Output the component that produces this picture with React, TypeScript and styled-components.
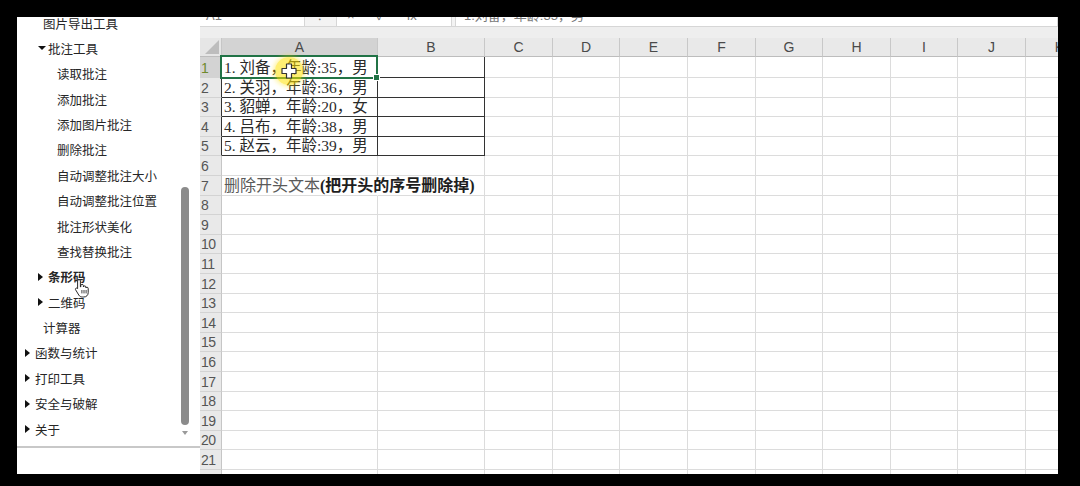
import React from "react";
import styled, { createGlobalStyle } from "styled-components";

const GlobalStyle = createGlobalStyle`
  html, body {
    margin: 0;
    padding: 0;
    background: #000;
  }
  body {
    font-family: "Noto Sans CJK SC", "Noto Sans", sans-serif;
  }
`;

const CJK = `"Noto Sans CJK SC", "Noto Sans", sans-serif`;
const SERIF = `"Liberation Serif", "Noto Sans CJK SC", serif`;
const SANS = `"Liberation Sans", "Noto Sans CJK SC", sans-serif`;

const Frame = styled.div`
  width: 1080px;
  height: 486px;
  box-sizing: border-box;
  padding: 17px 22px 12px 17px;
  background: #000;
  display: flex;
`;

const Screen = styled.div`
  width: 1041px;
  height: 457px;
  background: #fff;
  display: flex;
  overflow: hidden;
`;

/* ---------- left tool tree ---------- */

const Panel = styled.div`
  position: relative;
  width: 183px;
  flex: none;
  display: flex;
  flex-direction: column;
  background: #fff;
`;

const PanelBody = styled.div`
  height: 429px;
  display: flex;
  overflow: hidden;
`;

const TreeList = styled.div`
  flex: 1;
  margin-top: -6.7px;
`;

const TreeRow = styled.div<{ $indent: number; $bold?: boolean }>`
  height: 25.375px;
  display: flex;
  align-items: center;
  padding-left: ${(p) => p.$indent}px;
  font-family: ${CJK};
  font-size: 12.5px;
  font-weight: ${(p) => (p.$bold ? 700 : 400)};
  color: #262626;
  white-space: nowrap;
`;

const Caret = styled.span<{ $open?: boolean }>`
  width: 10px;
  flex: none;
  display: flex;
  align-items: center;
  &::before {
    content: "";
    display: block;
    width: 0;
    height: 0;
    ${(p) =>
      p.$open
        ? `border-left: 4px solid transparent;
           border-right: 4px solid transparent;
           border-top: 4.5px solid #111;`
        : `border-top: 4px solid transparent;
           border-bottom: 4px solid transparent;
           border-left: 5px solid #111;`}
  }
`;

const ScrollCol = styled.div`
  width: 20px;
  flex: none;
  padding-top: 170px;
  box-sizing: border-box;
  display: flex;
  flex-direction: column;
  align-items: flex-start;
`;

const Thumb = styled.div`
  width: 8px;
  height: 238px;
  margin-left: 1px;
  border-radius: 4px;
  background: #8b8b8b;
`;

const ScrollArrow = styled.div`
  margin: 6px 0 0 2px;
  width: 0;
  height: 0;
  border-left: 3.5px solid transparent;
  border-right: 3.5px solid transparent;
  border-top: 4px solid #9a9a9a;
`;

const PanelFoot = styled.div`
  height: 26px;
  border-top: 2px solid #c8c8c8;
`;

const HandCursor = styled.svg`
  position: absolute;
  left: 57px;
  top: 261px;
`;

/* ---------- spreadsheet ---------- */

const Sheet = styled.div`
  flex: 1;
  display: flex;
  flex-direction: column;
  min-width: 0;
  overflow: hidden;
`;

const FormulaBar = styled.div`
  height: 10px;
  flex: none;
  display: flex;
  overflow: hidden;
  background: #fff;
`;

const BarBox = styled.div<{ $w?: number; $tint?: boolean }>`
  ${(p) => (p.$w ? `width: ${p.$w}px; flex: none;` : `flex: 1;`)}
  box-sizing: border-box;
  display: flex;
  align-items: flex-end;
  overflow: hidden;
  background: ${(p) => (p.$tint ? "#f3f3f3" : "#fff")};
  border-right: 1px solid #d6d6d6;
  border-bottom: 1px solid #d6d6d6;
`;

const BarText = styled.span<{ $pad: number; $gap?: number }>`
  padding-left: ${(p) => p.$pad}px;
  margin-bottom: 2px;
  line-height: 16px;
  font-family: ${SANS};
  font-size: 13px;
  color: #777;
  white-space: nowrap;
  word-spacing: ${(p) => p.$gap ?? 0}px;
`;

const Band = styled.div`
  height: 11px;
  flex: none;
  background: #eeeeee;
`;

const GridWrap = styled.div`
  position: relative;
  flex: 1;
  overflow: hidden;
`;

const Grid = styled.div`
  display: grid;
  grid-template-columns: 22px 156px 107px 68px 67px 68px 68px 67px 68px 67px 68px 68px;
  grid-template-rows: 19px 21px repeat(21, 19.6px);
`;

const Corner = styled.div`
  background: #e6e6e6;
  border-right: 1px solid #c6c6c6;
  border-bottom: 1px solid #bdbdbd;
  box-sizing: border-box;
  display: flex;
  align-items: flex-end;
  justify-content: flex-end;
  padding: 0 2px 2px 0;
  &::after {
    content: "";
    width: 0;
    height: 0;
    border-left: 14px solid transparent;
    border-bottom: 14px solid #bdbdbd;
  }
`;

const ColHead = styled.div<{ $active?: boolean }>`
  box-sizing: border-box;
  background: ${(p) => (p.$active ? "#d3d3d3" : "#e9e9e9")};
  border-right: 1px solid #c8c8c8;
  border-bottom: 1px solid #bdbdbd;
  display: flex;
  align-items: center;
  justify-content: center;
  font-family: ${SANS};
  font-size: 14px;
  color: #4a4a4a;
`;

const RowHead = styled.div<{ $active?: boolean; $edge?: boolean }>`
  box-sizing: border-box;
  background: ${(p) => (p.$active ? "#d3d3d3" : "#e9e9e9")};
  border-right: 1px solid ${(p) => (p.$edge ? "#333" : "#c6c6c6")};
  border-bottom: 1px solid #d3d3d3;
  display: flex;
  align-items: flex-end;
  padding: 0 0 0 1px;
  font-family: ${SANS};
  font-size: 14px;
  line-height: 18px;
  letter-spacing: -0.6px;
  color: ${(p) => (p.$active ? "#6f8a2c" : "#555")};
`;

const Cell = styled.div<{ $boxed?: boolean; $spill?: boolean }>`
  box-sizing: border-box;
  min-width: 0;
  border-right: 1px solid ${(p) => (p.$boxed ? "#333" : p.$spill ? "transparent" : "#dcdcdc")};
  border-bottom: 1px solid ${(p) => (p.$boxed ? "#333" : "#dcdcdc")};
  display: flex;
  align-items: flex-end;
  padding-left: 2px;
  font-family: ${SERIF};
  font-size: 15.5px;
  line-height: 18px;
  color: #2a2a2a;
  white-space: nowrap;
  overflow: visible;
`;

const Note = styled.span`
  font-family: ${SERIF};
  font-size: 16px;
  color: #5a5a5a;
  b {
    color: #1e1e1e;
    font-weight: 700;
  }
`;

const Selection = styled.div`
  position: absolute;
  left: 20px;
  top: 17px;
  width: 158px;
  height: 24px;
  box-sizing: border-box;
  border: 2px solid #217346;
  pointer-events: none;
  &::after {
    content: "";
    position: absolute;
    right: -4px;
    bottom: -4px;
    width: 5px;
    height: 5px;
    background: #217346;
    border: 1px solid #fff;
  }
`;

const Spot = styled.div`
  position: absolute;
  left: 75px;
  top: 19px;
  width: 28px;
  height: 28px;
  border-radius: 50%;
  background: rgba(255, 226, 0, 0.55);
  box-shadow: 0 0 4px 2px rgba(255, 226, 0, 0.35);
  display: flex;
  align-items: center;
  justify-content: center;
`;

const columns = ["A", "B", "C", "D", "E", "F", "G", "H", "I", "J", "K"];

const people = [
  "1. 刘备，年龄:35，男",
  "2. 关羽，年龄:36，男",
  "3. 貂蝉，年龄:20，女",
  "4. 吕布，年龄:38，男",
  "5. 赵云，年龄:39，男",
];

type TreeItem = { label: string; indent: number; caret?: "open" | "closed"; bold?: boolean };

const tree: TreeItem[] = [
  { label: "图片导出工具", indent: 26 },
  { label: "批注工具", indent: 21, caret: "open" },
  { label: "读取批注", indent: 40 },
  { label: "添加批注", indent: 40 },
  { label: "添加图片批注", indent: 40 },
  { label: "删除批注", indent: 40 },
  { label: "自动调整批注大小", indent: 40 },
  { label: "自动调整批注位置", indent: 40 },
  { label: "批注形状美化", indent: 40 },
  { label: "查找替换批注", indent: 40 },
  { label: "条形码", indent: 21, caret: "closed", bold: true },
  { label: "二维码", indent: 21, caret: "closed" },
  { label: "计算器", indent: 26 },
  { label: "函数与统计", indent: 8, caret: "closed" },
  { label: "打印工具", indent: 8, caret: "closed" },
  { label: "安全与破解", indent: 8, caret: "closed" },
  { label: "关于", indent: 8, caret: "closed" },
];

const ToolTree = () => (
  <Panel>
    <PanelBody>
      <TreeList>
        {tree.map((item) => (
          <TreeRow key={item.label} $indent={item.indent} $bold={item.bold}>
            {item.caret && <Caret $open={item.caret === "open"} />}
            {item.label}
          </TreeRow>
        ))}
      </TreeList>
      <ScrollCol>
        <Thumb />
        <ScrollArrow />
      </ScrollCol>
    </PanelBody>
    <PanelFoot />
    <HandCursor width="16" height="20" viewBox="0 0 16 20">
      <path
        d="M5 1.5c.8 0 1.4.6 1.4 1.4v6l.4-.1V7.6c0-.8.6-1.3 1.3-1.3s1.3.5 1.3 1.3v1.3c.2-.7.7-1 1.3-1 .7 0 1.2.5 1.2 1.2v.9c.2-.5.6-.8 1.1-.8.7 0 1.2.5 1.2 1.2v4.2c0 2.6-1.8 4.4-4.4 4.4H8.3c-1.5 0-2.6-.6-3.4-1.8L1.6 11.8c-.4-.6-.2-1.3.4-1.6.5-.3 1.1-.2 1.5.3l.1.1V2.9c0-.8.6-1.4 1.4-1.4z"
        fill="#fff"
        stroke="#111"
        strokeWidth="0.9"
        strokeLinejoin="round"
      />
      <path d="M7.9 12v3.4M10 12v3.4M12.1 12v3.4" stroke="#111" strokeWidth="0.8" />
    </HandCursor>
  </Panel>
);

const SheetView = () => {
  const rows = Array.from({ length: 22 }, (_, i) => i + 1);
  return (
    <Sheet>
      <FormulaBar>
        <BarBox $w={105}>
          <BarText $pad={6}>A1</BarText>
        </BarBox>
        <BarBox $w={32} $tint>
          <BarText $pad={13}>⁝</BarText>
        </BarBox>
        <BarBox $w={115}>
          <BarText $pad={10} $gap={18}>× ✓ fx</BarText>
        </BarBox>
        <BarBox $w={4} $tint />
        <BarBox>
          <BarText $pad={8}>1.刘备，年龄:35，男</BarText>
        </BarBox>
      </FormulaBar>
      <Band />
      <GridWrap>
        <Grid>
          <Corner />
          {columns.map((c) => (
            <ColHead key={c} $active={c === "A"}>
              {c}
            </ColHead>
          ))}
          {rows.map((r) => (
            <React.Fragment key={r}>
              <RowHead $active={r === 1} $edge={r <= 5}>
                {r}
              </RowHead>
              {columns.map((c) => {
                const boxed = r <= 5 && (c === "A" || c === "B");
                const spill = r === 7 && c === "A";
                return (
                  <Cell key={c} $boxed={boxed} $spill={spill}>
                    {c === "A" && r <= 5 && people[r - 1]}
                    {c === "A" && r === 7 && (
                      <Note>
                        删除开头文本<b>(把开头的序号删除掉)</b>
                      </Note>
                    )}
                  </Cell>
                );
              })}
            </React.Fragment>
          ))}
        </Grid>
        <Selection />
        <Spot>
          <svg width="16" height="16" viewBox="0 0 16 16">
            <path
              d="M5.5 1h5v4.5H15v5h-4.5V15h-5v-4.5H1v-5h4.5z"
              fill="#fff"
              stroke="#333"
              strokeWidth="1.2"
              strokeLinejoin="round"
            />
          </svg>
        </Spot>
      </GridWrap>
    </Sheet>
  );
};

export default function App() {
  return (
    <>
      <GlobalStyle />
      <Frame>
        <Screen>
          <ToolTree />
          <SheetView />
        </Screen>
      </Frame>
    </>
  );
}
